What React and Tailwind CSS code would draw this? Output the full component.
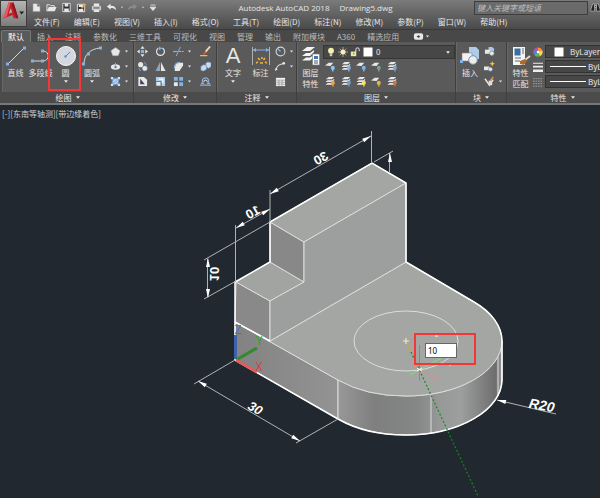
import { useState } from "react";

const MENUS = ["文件(F)", "编辑(E)", "视图(V)", "插入(I)", "格式(O)", "工具(T)", "绘图(D)", "标注(N)", "修改(M)", "参数(P)", "窗口(W)", "帮助(H)"];
const TABS = ["默认", "插入", "注释", "参数化", "三维工具", "可视化", "视图", "管理", "输出", "附加模块", "A360", "精选应用"];

const W = "#e8e8e8";
const B = "#7fb2e5";

// small 12x12 glyphs used all over the ribbon
const GLYPHS = {
  new: <path d="M2 1.5h5.5L10 4v6.5H2z M7 1.5V4.5H10" fill={W} stroke="#777" strokeWidth=".6" />,
  open: (
    <>
      <path d="M1 10V3h3l1 1h4v2" fill="#777" stroke={W} />
      <path d="M1 10l2-4.5h8.5L9.5 10z" fill={W} />
    </>
  ),
  save: (
    <>
      <path d="M2 1.5h8v9H2z" fill="#2d3136" stroke={W} />
      <path d="M4 2h4v3H4z M3.5 7h5v3.500h-5z" fill={W} />
    </>
  ),
  saveas: (
    <>
      <path d="M1.500 2.500h8v8h-8z" fill="#2d3136" stroke={W} />
      <path d="M3 3h5v2.500H3z M3 7.500h5v3H3z" fill={W} />
      <path d="M6 7l4.500-5" stroke="#e8a13a" strokeWidth="1.600" />
    </>
  ),
  print: (
    <>
      <path d="M3 1.500h6v3H3z M3 8h6v3H3z" fill={W} />
      <path d="M1 4.500h10v4.500H1z" fill="#cfcfcf" />
      <path d="M2.500 6.500h7" stroke="#444" />
    </>
  ),
  undo: <path d="M1 5l4-3v2c4 0 6 1.500 6 5-1.500-2-3-2.500-6-2.500V8.500z" fill={W} />,
  redo: <path d="M11 5L7 2v2C3 4 1 5.500 1 9c1.500-2 3-2.500 6-2.500V8.500z" fill="#8b8b8b" />,
  custom: <path d="M3 2.500h6M2.500 5h7L6 9z" fill={W} stroke={W} />,
  polygon: <path d="M6 1.500l5 3.700-2 5.300H3L1 5.200z" fill={W} stroke="#9aa7b4" strokeWidth=".6" />,
  ellipse: (
    <>
      <ellipse cx="6" cy="6.500" rx="5" ry="3" fill={W} />
      <circle cx="6" cy="6.500" r="1.300" fill="#4d86c4" />
      <path d="M6 2v3" stroke={B} />
    </>
  ),
  hatch: (
    <>
      <path d="M2.500 2.500h7v7h-7z" fill="#9dbbe0" stroke="#5d8bc4" />
      <path d="M3 7l4-4M5 9l4-4" stroke="#e4eefa" strokeWidth=".8" />
      <path d="M1 1h2.500v2.500H1z M8.500 1H11v2.500H8.500z M1 8.500h2.500V11H1z M8.500 8.500H11V11H8.500z" fill="#cfe0f3" />
    </>
  ),
  move: (
    <>
      <path d="M6 0l2.200 3H3.800z M6 12l2.200-3H3.800z M0 6l3-2.200v4.400z M12 6L9 3.800v4.400z" fill={W} />
      <path d="M4.300 4.300h3.400v3.400H4.300z" fill={B} />
    </>
  ),
  rotate: (
    <>
      <path d="M8 2.200A4.300 4.300 0 1 1 3.500 2.500" fill="none" stroke={W} strokeWidth="1.300" />
      <path d="M4 .5L8 2.500 4.500 4.500z" fill={B} />
    </>
  ),
  trim: (
    <>
      <path d="M0 6h5" stroke={B} strokeWidth="1.300" />
      <path d="M6.500 6h5" stroke="#a9bdd0" strokeWidth="1.300" strokeDasharray="2 1" />
      <path d="M3.500 11L8 1" stroke="#8fb4d8" />
    </>
  ),
  copy: (
    <>
      <circle cx="4" cy="4" r="2.800" fill={W} />
      <circle cx="8.500" cy="8" r="2.800" fill={W} stroke="#7a93ab" strokeWidth=".6" />
      <path d="M8 1.500l2.500 2.500M2 8l2 3" stroke={B} />
    </>
  ),
  mirror: (
    <>
      <path d="M5.500 1v10H.5z" fill="#8ea4b8" />
      <path d="M6.500 1v10h5z" fill={W} />
    </>
  ),
  fillet: (
    <>
      <path d="M2 11V8c0-4 2-6 6-6h3v3L7 11z" fill={W} />
      <path d="M1.500 8c0-4 2-6.500 6-6.500" fill="none" stroke={B} strokeWidth="1.200" />
    </>
  ),
  stretch: (
    <>
      <path d="M1.500 1h6L11 4v7H1.500z" fill={W} />
      <path d="M3.500 9V3l5 6z" fill="#3a4856" />
    </>
  ),
  scale: (
    <>
      <path d="M1 1h10v10H7V6H1z" fill="#a9cdf0" />
      <path d="M1 6h5.500v5H1z" fill={W} stroke="#4d5c6b" strokeWidth=".7" />
      <path d="M4 3.500h4.500V8" fill="none" stroke="#fff" strokeWidth="1.300" />
    </>
  ),
  array: (
    <>
      <path d="M1 1h4.200v4.200H1z M6.800 1H11v4.200H6.800z M6.800 6.800H11V11H6.800z" fill={B} />
      <path d="M1 6.800h4.200V11H1z" fill={W} />
    </>
  ),
  erase: (
    <>
      <path d="M6 6.500L11 .5" stroke="#f6d9a0" strokeWidth="2" />
      <path d="M3 9l2.500-3.500 1.800 1.500L4 10z" fill="#e0532a" />
      <path d="M0 10.500h8" stroke="#f0c03c" strokeWidth="1.300" />
    </>
  ),
  explode: <path d="M1 6l3-2 3 1v4l-3 2-3-1z M6 3l2.500-2L12 2v4L9.500 8 7.500 7z" fill="#c3dbf2" stroke="#7d9fc0" strokeWidth=".6" />,
  offset: (
    <>
      <path d="M0 10h12M1 8h2.500C1 5 3.500 2 6 2s5 3 2.500 6H11" fill="none" stroke="#8fb0d8" strokeWidth="1.300" />
      <path d="M4 6.500a2 2 0 1 1 4 0" fill="none" stroke={W} />
    </>
  ),
  center: (
    <>
      <circle cx="6" cy="6" r="4.800" fill="none" stroke="#cfd5db" strokeWidth="1.200" />
      <path d="M3 3l3 3" stroke={B} strokeWidth="1.300" />
    </>
  ),
  leader: (
    <>
      <path d="M1 10c1-5 3-6 8-7" fill="none" stroke="#cfd5db" strokeWidth="1.200" />
      <circle cx="9.500" cy="2.500" r="1.500" fill={W} />
      <path d="M0 11l.5-3.500L3 9z" fill={W} />
    </>
  ),
  table: (
    <>
      <path d="M1 2h10v9H1z" fill="#f2f2f2" />
      <path d="M1 4.500h10M1 6.700h10M1 8.900h10M4.300 4.500V11M7.700 4.500V11" stroke="#888" strokeWidth=".7" />
    </>
  ),
  bulb: (
    <>
      <circle cx="6" cy="4.500" r="3.500" fill="#f8efaa" />
      <path d="M4.500 7.500h3V11h-3z" fill="#c9c9c9" />
    </>
  ),
  sun: (
    <>
      <path d="M6 0v12M0 6h12M2 2l8 8M10 2l-8 8" stroke="#b9b18a" />
      <circle cx="6" cy="6" r="3" fill="#f4ecc4" />
    </>
  ),
  lock: (
    <>
      <path d="M1 5.500h6.500V11H1z" fill="#ece9a8" />
      <path d="M7 6V3a2 2 0 0 1 4 0v2" fill="none" stroke={W} strokeWidth="1.200" />
      <path d="M4.500 7v2" stroke="#555" />
    </>
  ),
  square: <path d="M1.500 1.500h9v9h-9z" fill="#fff" />,
  block: (
    <>
      <path d="M5 1h4l2 2v3H5z" fill="#a9c6e4" />
      <path d="M1 4h6v4.500H1z" fill={W} />
      <circle cx="8.500" cy="8" r="2.500" fill={W} stroke="#71869b" strokeWidth=".7" />
    </>
  ),
  blockNew: (
    <>
      <path d="M0 6h6v4H0z" fill={W} />
      <circle cx="7" cy="9" r="2.200" fill={W} stroke="#71869b" strokeWidth=".7" />
      <path d="M9 0l.9 2.100L12 3l-2.100.9L9 6l-.9-2.100L6 3l2.100-.9z" fill="#ffc53d" />
    </>
  ),
  blockEdit: (
    <>
      <path d="M1 3l5 7 4-6" fill="none" stroke={W} strokeWidth="1.500" />
      <path d="M5 5h4v5H5z" fill="#ddd" />
      <path d="M7 5l3-4" stroke="#f0974a" strokeWidth="1.500" />
    </>
  ),
  wheel: (
    <>
      <circle cx="6" cy="6" r="5.500" fill="#e34747" />
      <path d="M6 6V.5a5.500 5.500 0 0 1 5 3.300z" fill="#f5923d" />
      <path d="M6 6l5-2.200A5.500 5.500 0 0 1 8.200 11z" fill="#efe04c" />
      <path d="M6 6l2.200 5A5.500 5.500 0 0 1 1.600 9.300z" fill="#54b950" />
      <path d="M6 6L1.600 9.300a5.500 5.500 0 0 1-.6-5.500z" fill="#4b85dd" />
      <path d="M6 6L1 3.800A5.500 5.500 0 0 1 6 .5z" fill="#9c59c9" />
      <circle cx="6" cy="6" r="1.500" fill="#fff" />
    </>
  ),
  weight: <path d="M0 1h12v1H0z M0 4.500h12v2H0z M0 9h12v3H0z" fill="#eee" />,
  linetype: <path d="M0 2h12M0 5h12M0 8h12M0 11h12" stroke="#aaa" strokeDasharray="2 1" />,
  camera: (
    <>
      <rect x="1" y="2.500" width="10" height="7" rx="2" fill={W} />
      <path d="M4 6l2-1.500L8 6 6 7.500z" fill="#444" />
    </>
  ),
  find: <path d="M1 8l2-6h2v8H1z M7 2h2l2 6v2H7z M5 4h2v2H5z" fill="#222" stroke="#ddd" strokeWidth=".6" />,
};

// layer tools share one sheet, with a coloured badge in the corner
const LAYER_TOOLS = [
  { name: "关闭", badge: "#8fc5f4", flat: true },
  { name: "隔离", badge: "#86b0dc" },
  { name: "冻结", badge: "#7db5ea", flat: true },
  { name: "锁定", badge: "#7f9d93", flat: true },
  { name: "置为当前", badge: "#7ea5c7" },
  { name: "打开所有图层", badge: "#f1a23a" },
  { name: "取消隔离", badge: "#6f9dcc" },
  { name: "解冻所有图层", badge: "#ffe14d" },
  { name: "解锁", badge: "#e4b53e", flat: true },
  { name: "匹配图层", badge: "#cf7435" },
];

function Glyph({ name, className = "size-3" }) {
  return (
    <svg viewBox="0 0 12 12" className={`${className} shrink-0`} aria-hidden="true">
      {GLYPHS[name]}
    </svg>
  );
}

function LayerGlyph({ badge, flat }) {
  return (
    <svg viewBox="0 0 12 12" className="size-[11px]" aria-hidden="true">
      {flat ? (
        <path d="M0 5l4-3h5L6 5.500z" fill={W} />
      ) : (
        <path d="M1 3.500L4 1h6L7.500 3.500z M1 6l2-1.500h5L10 3v1.500L7.500 6.500H1z M1 9l2-1.500h5l2-1.500v1.500L7.500 9.500H1z" fill={W} />
      )}
      <circle cx="8.500" cy="7.500" r="2.200" fill={badge} />
      <path d="M7.800 9h1.500v2.500H7.800z" fill={badge} />
    </svg>
  );
}

function Caret({ className = "w-1" }) {
  return (
    <svg viewBox="0 0 6 4" className={`h-[3px] shrink-0 ${className}`} aria-hidden="true">
      <path d="M0 0h6L3 4z" fill={W} />
    </svg>
  );
}

function BigButton({ label, children, caret, className = "w-[25px]", marked }) {
  return (
    <button type="button" className={`relative flex flex-col items-center shrink-0 pt-1 ${className}`}>
      <span className="h-5 flex items-center justify-center">{children}</span>
      <span className="mt-px whitespace-pre text-center leading-[11px]">{label}</span>
      {caret && <Caret className="mt-[2px] w-1" />}
      {marked && <span className="absolute -top-1 -left-[5px] w-[33px] h-[53px] border-2 border-[#f43636]"></span>}
    </button>
  );
}

function SmallTool({ name, caret }) {
  return (
    <button type="button" title={name} className="h-[15px] flex items-center gap-1">
      <Glyph name={name} className="size-[11px]" />
      {caret && <Caret className="w-[3px]" />}
    </button>
  );
}

function Panel({ title, children, className = "" }) {
  return (
    <section className={`flex flex-col border-r border-[#3f3f3f] ${className}`}>
      <div className="flex h-[50px] bg-[#5a5a5a] border-l border-[#676767]">{children}</div>
      <button type="button" className="flex h-[11px] items-center justify-center gap-1 bg-[#4b4b4b] leading-[10px]">
        {title}
        <Caret />
      </button>
    </section>
  );
}

function PropSelect({ label, icon, line }) {
  return (
    <label className="flex h-[15px] items-center gap-[2px]">
      <Glyph name={icon} className="size-[10px]" />
      <span className="flex h-[13px] w-24 items-center gap-[2px] border border-[#333] bg-[#474747] pl-1">
        {line ? <span className="h-px w-[36px] shrink-0 bg-white"></span> : <Glyph name="square" className="mx-[3px] size-3" />}
        <select aria-label={label} className="w-full appearance-none bg-transparent outline-none">
          <option>ByLayer</option>
        </select>
      </span>
    </label>
  );
}

function TitleBar() {
  return (
    <header className="flex overflow-hidden bg-linear-to-b from-[#7b7b7b] to-[#4a4a4a]">
      <button type="button" aria-label="应用程序" className="h-[27px] w-[27px] shrink-0 border border-[#3c3c3c] bg-linear-to-b from-[#b5b5b5] to-[#7c7c7c]">
        <svg viewBox="0 0 26 26" className="size-full">
          <path d="M8 1.500h5L18 18h-5l-1-3.500L6 17l-4 1.500z" fill="#c51f2c" />
          <path d="M8 1.500h2L6 16l-4 2.500z" fill="#e85a5c" />
          <path d="M13 1.500L18 18h-2L11 3z" fill="#8f1620" />
          <path d="M10 7.500l1.700 4.500-3.500 1z" fill="#b4b4b4" />
          <path d="M19 11h5l-2.500 3z" fill="#222" />
        </svg>
      </button>
      <div className="min-w-0 flex-1">
        <div className="flex h-[15px] items-center">
          <div className="flex w-[132px] shrink-0 items-center gap-1 pl-1">
            {["new", "open", "save", "saveas", "print", "undo"].map((name) => (
              <button key={name} type="button" title={name}>
                <Glyph name={name} className="size-[11px]" />
              </button>
            ))}
            <Caret className="w-[2px]" />
            <button type="button" title="redo">
              <Glyph name="redo" className="size-[11px]" />
            </button>
            <Caret className="w-[2px]" />
            <button type="button" title="custom">
              <Glyph name="custom" className="size-[10px]" />
            </button>
          </div>
          <h1 className="flex flex-1 justify-center gap-[10px] whitespace-nowrap font-['Open_Sans','Noto_Sans_CJK_SC',sans-serif]">
            <span>Autodesk AutoCAD 2018</span>
            <span>Drawing5.dwg</span>
          </h1>
          <div className="flex w-[128px] shrink-0 items-center gap-[2px]">
            <svg viewBox="0 0 3 5" className="h-[5px] w-[3px]">
              <path d="M0 0l3 2.500L0 5z" fill="#fff" />
            </svg>
            <input
              aria-label="搜索"
              placeholder="键入关键字或短语"
              className="h-[14px] w-[114px] shrink-0 border border-[#3d3d3d] bg-[#6a6a6a] px-[2px] italic outline-none placeholder:text-[#bdbdbd]"
            />
            <Glyph name="find" className="size-[11px]" />
          </div>
        </div>
        <nav className="flex h-[14px] items-center gap-[14px] pl-[7px]">
          {MENUS.map((menu) => (
            <button key={menu} type="button" className="whitespace-nowrap">
              {menu}
            </button>
          ))}
        </nav>
      </div>
    </header>
  );
}

function Ribbon() {
  const [active, setActive] = useState("默认");

  return (
    <>
      <div className="flex h-[13px] items-end overflow-hidden border-t border-[#393939] bg-[#484848] pl-px">
        {TABS.map((tab) => (
          <button
            key={tab}
            type="button"
            onClick={() => setActive(tab)}
            className={`h-[12px] whitespace-nowrap px-[6px] leading-[11px] ${active === tab ? "rounded-t-xs border border-b-0 border-[#777] bg-[#5a5a5a] text-white" : "text-[#bcbcbc]"}`}
          >
            {tab}
          </button>
        ))}
        <button type="button" title="camera" className="flex h-[12px] items-center gap-[2px] pl-2">
          <Glyph name="camera" className="size-[11px]" />
          <Caret className="w-[3px]" />
        </button>
      </div>

      <div className="flex overflow-x-clip border-b-2 border-[#777] bg-[#4b4b4b] pl-[2px]">
        <Panel title="绘图" className="w-[132px] shrink-0">
          <BigButton label="直线">
            <svg viewBox="0 0 20 20" className="size-5">
              <path d="M2 18L18 2" stroke="#d8d8d8" />
              <path d="M0 16.500h3v3H0z M17 .5h3v3h-3z" fill={B} />
            </svg>
          </BigButton>
          <BigButton label="多段线">
            <svg viewBox="0 0 20 20" className="size-5">
              <path d="M12 5c7 0 7 10 0 10H1" fill="none" stroke="#d8d8d8" />
              <path d="M0 13.500h3v3H0z M10 13.500h3v3h-3z M10 3.500h3v3h-3z" fill={B} />
            </svg>
          </BigButton>
          <BigButton label="圆" caret marked>
            <svg viewBox="0 0 20 20" className="size-5">
              <circle cx="10" cy="10" r="9.500" fill="#d4d8de" stroke="#f4f4f4" />
              <path d="M9.500 10.500L14 6" stroke="#4d86c9" />
              <circle cx="9.500" cy="10.500" r="1.300" fill="#5e95d4" />
            </svg>
          </BigButton>
          <BigButton label="圆弧" caret className="w-7">
            <svg viewBox="0 0 20 20" className="size-5">
              <path d="M2 18C2 9 8 3 18 2" fill="none" stroke="#d8d8d8" />
              <path d="M0 16.500h3v3H0z M5 6.500h3v3H5z M17 .5h3v3h-3z" fill={B} />
            </svg>
          </BigButton>
          <div className="pl-1 pt-[2px]">
            <SmallTool name="polygon" caret />
            <SmallTool name="ellipse" caret />
            <SmallTool name="hatch" caret />
          </div>
        </Panel>

        <Panel title="修改" className="w-[83px] shrink-0">
          <div className="grid grid-cols-[18px_18px_27px_14px] content-start pl-[2px] pt-[2px]">
            <SmallTool name="move" />
            <SmallTool name="rotate" />
            <SmallTool name="trim" caret />
            <SmallTool name="erase" />
            <SmallTool name="copy" />
            <SmallTool name="mirror" />
            <SmallTool name="fillet" caret />
            <SmallTool name="explode" />
            <SmallTool name="stretch" />
            <SmallTool name="scale" />
            <SmallTool name="array" caret />
            <SmallTool name="offset" />
          </div>
        </Panel>

        <Panel title="注释" className="w-20 shrink-0">
          <BigButton label="文字" caret className="w-[30px]">
            <span className="font-['Liberation_Sans',Arial,sans-serif] text-[22px] leading-5">A</span>
          </BigButton>
          <BigButton label="标注">
            <svg viewBox="0 0 20 20" className="size-5">
              <path d="M1.500 1v18M18.500 1v18" stroke="#b0b0b0" />
              <path d="M2 4h16" stroke={B} />
              <path d="M2 4l3-2v4z M18 4l-3-2v4z" fill={B} />
              <path d="M5 17l2-1M7 12l2 2M11 11v2M14 12l-1.500 2M16 17l-2-1M9 17h3" stroke="#f2b13b" strokeWidth="1.600" />
            </svg>
          </BigButton>
          <div className="pl-[2px] pt-[2px]">
            <SmallTool name="center" caret />
            <SmallTool name="leader" caret />
            <SmallTool name="table" />
          </div>
        </Panel>

        <Panel title="图层" className="w-[159px] shrink-0">
          <BigButton label={"图层\n特性"}>
            <svg viewBox="0 0 20 20" className="size-5">
              <path d="M1 5l5-4h8l-5 4z M1 10l4-3h4l4-3v2L9 10z M1 14.500l4-3h4l3-2v2.500l-3 2.500z" fill="#f4f4f4" />
              <path d="M11.500 8h7v11h-7z" fill="#fff" stroke="#777" strokeWidth=".6" />
              <path d="M13 10h4v3h-4z" fill="#3f79b8" />
              <path d="M13 15h4M13 17h4" stroke="#456" />
            </svg>
          </BigButton>
          <div className="min-w-0 flex-1 pt-[3px]">
            <div className="flex h-[14px] items-center gap-[2px] border border-[#363636] bg-[#474747] pl-[2px] pr-1">
              <Glyph name="bulb" className="size-[10px]" />
              <Glyph name="sun" className="size-[10px]" />
              <Glyph name="lock" className="size-[10px]" />
              <Glyph name="square" />
              <select aria-label="图层" className="min-w-0 flex-1 appearance-none bg-transparent outline-none">
                <option>0</option>
              </select>
              <Caret />
            </div>
            <div className="grid w-[77px] grid-cols-5">
              {LAYER_TOOLS.map((tool) => (
                <button key={tool.name} type="button" title={tool.name} className="flex h-[15px] items-center justify-center">
                  <LayerGlyph badge={tool.badge} flat={tool.flat} />
                </button>
              ))}
            </div>
          </div>
        </Panel>

        <Panel title="块" className="w-[51px] shrink-0">
          <BigButton label="插入" className="w-[26px]">
            <svg viewBox="0 0 20 20" className="size-5">
              <path d="M9 1h7l3 3v9H9z" fill="#aecbe8" />
              <path d="M2 7h10v8H2z" fill="#f2f2f2" stroke="#888" strokeWidth=".6" />
              <circle cx="13" cy="14" r="4.300" fill="#ececec" stroke="#7890a8" />
              <path d="M0 14h3v3H0z" fill={B} />
            </svg>
          </BigButton>
          <div className="pl-px pt-[2px]">
            <SmallTool name="block" />
            <SmallTool name="blockNew" />
            <SmallTool name="blockEdit" caret />
          </div>
        </Panel>

        <Panel title="特性" className="min-w-[112px] flex-1">
          <BigButton label={"特性\n匹配"}>
            <svg viewBox="0 0 20 20" className="size-5">
              <path d="M2 1h12v18H2z" fill="#f5f5f5" />
              <path d="M3.500 2.500h6v7h-6z" fill="#3c6d9e" />
              <path d="M11 3h2M11 5h2M11 7h2M4 12h6M4 15h5" stroke="#5a6c7e" />
              <path d="M14 14l5-4" stroke="#e9d6b4" strokeWidth="2" />
              <path d="M9 15l5-2 2 2-3 4-4-1z" fill="#b0692a" />
            </svg>
          </BigButton>
          <div className="pt-[2px]">
            <PropSelect label="颜色" icon="wheel" />
            <PropSelect label="线宽" icon="weight" line />
            <PropSelect label="线型" icon="linetype" line />
          </div>
        </Panel>
      </div>
    </>
  );
}

// arrow head pointing along +x, tip at the origin
function Arrow({ x, y, angle }) {
  return <path d="M0 0L-9 -2V2z" fill="#fff" transform={`translate(${x} ${y}) rotate(${angle})`} />;
}

function Model() {
  return (
    <svg viewBox="0 105 600 393" className="block w-full" aria-label="模型">
      <defs>
        <linearGradient id="round" gradientUnits="userSpaceOnUse" x1="338" y1="0" x2="502" y2="0">
          <stop offset="0" stopColor="#989898" />
          <stop offset=".22" stopColor="#7f7f7f" />
          <stop offset=".48" stopColor="#858686" />
          <stop offset=".62" stopColor="#979999" />
          <stop offset=".75" stopColor="#9d9f9e" />
          <stop offset=".96" stopColor="#6e6e6e" />
          <stop offset="1" stopColor="#999" />
        </linearGradient>
        <linearGradient id="front" x1="0" y1="0" x2="1" y2="0">
          <stop offset="0" stopColor="#828282" />
          <stop offset="1" stopColor="#939393" />
        </linearGradient>
      </defs>

      {/* SOLID */}
      <g stroke="#dcdedc" strokeLinejoin="round">
        <path d="M235 322L338 380V419L235 360z" fill="url(#front)" />
        <path d="M338 380A96 55.500 0 0 0 406 396A96 55.500 0 0 0 502 341V380A96 55.500 0 0 1 406 435A96 55.500 0 0 1 338 419z" fill="url(#round)" />
        <path d="M235 322L338 380A96 55.500 0 0 0 406 396A96 55.500 0 0 0 502 341A96 55.500 0 0 0 474 302L406 262L270 341z" fill="#a4a6a3" />
        <path d="M236 282L270 301V341L235 322z" fill="#898989" />
        <path d="M270 262L304 282L270 301L236 282z" fill="#a2a4a2" />
        <path d="M270 222L304 242V282L270 262z" fill="#888" />
        <path d="M270 222L372 163L406 183L304 242z" fill="#a4a6a4" />
        <path d="M304 242L406 183V262L270 341V301L304 282z" fill="#9c9f9e" />
        <path d="M431 395V434M498 357V396" />
        <ellipse cx="406" cy="341" rx="52" ry="30" fill="none" />
      </g>
      <path
        d="M235 360V282L270 262V222L372 163L406 183V262L474 302A96 55.500 0 0 1 502 341V380A96 55.500 0 0 1 406 435A96 55.500 0 0 1 338 419L235 360M235 322L270 341"
        fill="none"
        stroke="#fff"
        strokeWidth="1.500"
      />

      {/* DIMENSIONS */}
      <g stroke="#aeb3b8" fill="none">
        <path d="M371.500 131V162M270 190V222M235.500 225V282M270 194L371 136M236 228L270 209" />
        <path d="M204 260L270 222M204 299L236 281M207.500 259V297" />
        <path d="M374 162L393 151M389.500 153V173" />
        <path d="M235 360L194 384M338 419L296 443M198 381L300 441M497 400L556 414" />
      </g>
      <Arrow x={270} y={194} angle={150} />
      <Arrow x={371} y={136} angle={-30} />
      <Arrow x={236} y={228} angle={150} />
      <Arrow x={270} y={209} angle={-30} />
      <Arrow x={208} y={258} angle={-90} />
      <Arrow x={208} y={298} angle={90} />
      <Arrow x={390} y={153} angle={-90} />
      <Arrow x={198} y={381} angle={210} />
      <Arrow x={300} y={441} angle={30} />
      <Arrow x={497} y={400} angle={193} />
      <g fill="#fff" textAnchor="middle" className="font-['Liberation_Sans',Arial,sans-serif] text-[13px] font-bold">
        <text transform="translate(323 162) rotate(-30) scale(-1 1)">30</text>
        <text transform="translate(255 216) rotate(-30) scale(-1 1)">10</text>
        <text transform="translate(210 274) rotate(90) scale(-1 1)">10</text>
        <g className="italic">
          <text transform="translate(253 412) rotate(30)">30</text>
          <text transform="translate(541 410) rotate(10)" className="text-[14px]">R20</text>
        </g>
      </g>

      {/* UCS ICON */}
      <path d="M235.500 359V335" stroke="#3c62ae" strokeWidth="3" />
      <path d="M236 360L257 348" stroke="#33892f" strokeWidth="3" />
      <path d="M236 360L257 372" stroke="#e25c5c" strokeWidth="3" />
      <g textAnchor="middle" className="font-['Open_Sans',sans-serif] text-[12px]">
        <text x="238" y="334" fill="#2f78ea">Z</text>
        <text x="259" y="345" fill="#2ca52c">Y</text>
        <text x="259" y="371" fill="#dc3c3c">X</text>
      </g>

      {/* CURSOR */}
      <path d="M406 341L411 352" stroke="#d8a62c" strokeDasharray="3 1" />
      <path d="M411 352L478 496" stroke="#128a1c" strokeDasharray="2 2" strokeWidth="1.200" />
      <path d="M403 341H409M406 338V344" stroke="#f7ecc8" />
      <path d="M419.500 345V381" stroke="#7d7fd0" />
      <path d="M411 364L440 381" stroke="#e48a85" />
      <path d="M410 375L441 358" stroke="#7fe07d" />
      <path d="M417 368L422 371M417 371L422 368M435 336H438M449 365H451" stroke="#fff" />
    </svg>
  );
}

export default function App() {
  const [radius, setRadius] = useState("10");

  return (
    <div className="flex min-h-screen flex-col overflow-hidden bg-[#212830] font-['Noto_Sans_CJK_SC','Noto_Sans',sans-serif] text-[8px] leading-[12px] text-[#e6e6e6]">
      <TitleBar />
      <Ribbon />
      <main className="relative">
        <Model />
        <p className="absolute left-[2px] top-[3px] text-[#d0d0d0]">[-][东南等轴测][带边缘着色]</p>
        {/* dynamic input next to the cursor */}
        <div className="absolute left-[69%] top-[58%] h-8 w-[62px] border-2 border-[#f43636] pl-[9px] pt-2">
          <input
            aria-label="半径"
            value={radius}
            onChange={(e) => setRadius(e.target.value)}
            className="block h-[15px] w-8 border border-[#666] bg-white px-[2px] font-['Noto_Sans',sans-serif] text-black outline-none"
          />
        </div>
      </main>
    </div>
  );
}
